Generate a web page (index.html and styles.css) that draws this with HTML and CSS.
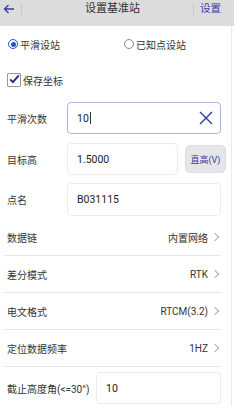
FILE: index.html
```html
<!DOCTYPE html>
<html lang="zh">
<head>
<meta charset="utf-8">
<link rel="stylesheet" href="styles.css">
</head>
<body>
<div class="page">
  <div class="header">
    <div class="back">
      <svg width="12" height="10" viewBox="0 0 12 10"><path d="M11 5H1.5M5.5 1L1.5 5L5.5 9" fill="none" stroke="#3a3ab0" stroke-width="1.3"/></svg>
    </div>
    <div class="vsep"></div>
    <div class="title">设置基准站</div>
    <div class="vsep"></div>
    <div class="action">设置</div>
  </div>
  <div class="form">
    <div class="radios">
      <label class="radio"><span class="ring on"></span>平滑设站</label>
      <label class="radio second"><span class="ring"></span>已知点设站</label>
    </div>
    <div class="check-row">
      <span class="box"><svg width="14" height="12" viewBox="0 0 14 12"><path d="M1.5 6.5L5 10L12.5 1.5" fill="none" stroke="#1f2a8a" stroke-width="2.4"/></svg></span>保存坐标
    </div>
    <div class="field first">
      <span class="label">平滑次数</span>
      <div class="input focus"><span>10</span><span class="caret"></span>
        <svg class="clear" width="14" height="14" viewBox="0 0 14 14"><path d="M1 1L13 13M13 1L1 13" stroke="#2a3a9a" stroke-width="1.4"/></svg>
      </div>
    </div>
    <div class="field">
      <span class="label">目标高</span>
      <div class="input short">1.5000</div>
      <div class="btn">直高(V)</div>
    </div>
    <div class="field third">
      <span class="label">点名</span>
      <div class="input">B031115</div>
    </div>
    <div class="list">
      <div class="item"><span>数据链</span><span class="val">内置网络<i class="chev"></i></span></div>
      <div class="item"><span>差分模式</span><span class="val">RTK<i class="chev"></i></span></div>
      <div class="item"><span>电文格式</span><span class="val">RTCM(3.2)<i class="chev"></i></span></div>
      <div class="item"><span>定位数据频率</span><span class="val">1HZ<i class="chev"></i></span></div>
    </div>
    <div class="field last">
      <span class="label wide">截止高度角(&lt;=30°)</span>
      <div class="input">10</div>
    </div>
  </div>
</div>
</body>
</html>
```
FILE: styles.css
```css
* { box-sizing: border-box; }
body {
  margin: 0;
  background: #fff;
  font-family: Roboto, "Noto Sans CJK SC", sans-serif;
  color: #333;
}
.page {
  width: 235px;
  height: 406px;
  overflow: hidden;
  position: relative;
  border-right: 1px solid #fff;
}
.page::after {
  content: "";
  position: absolute;
  top: 26px;
  right: 2px;
  width: 1px;
  bottom: 0;
  background: #e3f0e1;
}
.header {
  height: 26px;
  background: #dcdcdc;
  display: flex;
  align-items: flex-start;
  padding-top: 2px;
}
.back {
  width: 21px;
  height: 14px;
  display: flex;
  align-items: center;
  padding-left: 3px;
}
.vsep {
  width: 1px;
  height: 13px;
  background: #c8c8c8;
  margin-top: 1px;
}
.title {
  flex: 1;
  text-align: center;
  font-size: 11px;
  line-height: 14px;
  padding-left: 10px;
  color: #333;
}
.action {
  width: 40px;
  padding-left: 6px;
  font-size: 10.5px;
  line-height: 14px;
  color: #3b3b9e;
}
.form {
  padding: 0 13px 0 7px;
}
.radios {
  height: 36px;
  display: flex;
  align-items: center;
  font-size: 10px;
}
.radio {
  display: flex;
  align-items: center;
  margin-left: 1px;
}
.radio.second { margin-left: 64px; }
.ring {
  width: 10px;
  height: 10px;
  border: 1px solid #888;
  border-radius: 50%;
  margin-right: 2px;
  position: relative;
}
.ring.on { border-color: #2a56c8; }
.ring.on::after {
  content: "";
  position: absolute;
  left: 1.5px;
  top: 1.5px;
  width: 5px;
  height: 5px;
  border-radius: 50%;
  background: #2a56c8;
}
.check-row {
  height: 36px;
  display: flex;
  align-items: center;
  font-size: 10px;
}
.box {
  width: 14px;
  height: 14px;
  border: 1px solid #999;
  border-radius: 1px;
  margin-right: 2px;
  display: flex;
  align-items: center;
  justify-content: center;
}
.box svg { margin-top: -2px; margin-left: 1px; }
.field {
  display: flex;
  align-items: center;
  margin-top: 9px;
  font-size: 10px;
}
.field.first { margin-top: 4px; }
.field.third { margin-top: 8px; }
.field.last { margin-top: 5px; }
.label {
  width: 60px;
  flex-shrink: 0;
}
.label.wide { width: 89px; white-space: nowrap; }
.input {
  flex: 1;
  height: 32px;
  border: 1px solid #ececec;
  border-radius: 4px;
  display: flex;
  align-items: center;
  padding-left: 9px;
  font-size: 10.5px;
  color: #222;
}
.third .input { height: 33px; }
.input.focus {
  border-color: #b0b3dc;
  position: relative;
}
.caret {
  width: 1px;
  height: 12px;
  background: #333;
  margin-left: 1px;
}
.clear { margin-left: auto; margin-right: 7px; }
.input.short { flex: 0 0 111px; }
.btn {
  width: 42px;
  height: 28px;
  margin-left: 7px;
  margin-right: -5px;
  border-radius: 5px;
  background: #e6e6e8;
  border: 1px solid #dedee2;
  display: flex;
  align-items: center;
  justify-content: center;
  font-size: 9px;
  color: #3b3b9e;
  white-space: nowrap;
}
.list {
  margin-top: 3px;
  margin-left: -3px;
}
.item {
  height: 37px;
  border-bottom: 1px solid #e6e6e6;
  display: flex;
  align-items: center;
  justify-content: space-between;
  padding-left: 3px;
  font-size: 10px;
}
.val {
  display: flex;
  align-items: center;
}
.chev {
  width: 6px;
  height: 6px;
  border-top: 1px solid #aaa;
  border-right: 1px solid #aaa;
  transform: rotate(45deg);
  margin-left: 4px;
  margin-right: 3px;
}
```
